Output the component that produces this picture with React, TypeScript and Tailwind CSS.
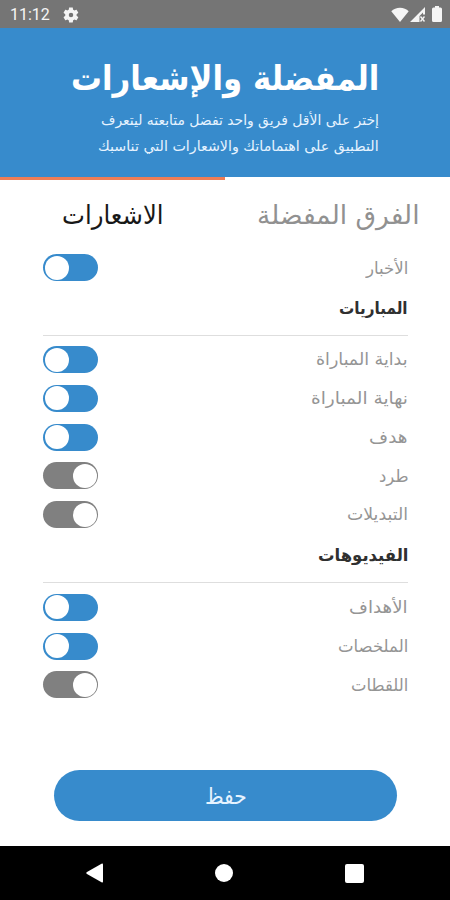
import { useLayoutEffect, useRef, useState } from "react";
import clsx from "clsx";

type FitTextProps = {
  text: string;
  width: number;
  className?: string;
};

// Stretches or squeezes a single line so that it fills the given width
function FitText({ text, width, className }: FitTextProps) {
  const ref = useRef<HTMLSpanElement>(null);
  const [scale, setScale] = useState(1);

  useLayoutEffect(() => {
    if (ref.current) setScale(width / ref.current.offsetWidth);
  }, [text, width]);

  return (
    <span className="flex justify-start" style={{ width }}>
      <span
        ref={ref}
        className={clsx("block shrink-0 origin-right whitespace-nowrap", className)}
        style={{ transform: `scaleX(${scale})` }}
      >
        {text}
      </span>
    </span>
  );
}

function Toggle({ on }: { on: boolean }) {
  return (
    <span
      dir="ltr"
      className={clsx(
        "mb-px flex h-[27px] w-[55px] items-center rounded-full px-[1.5px]",
        on ? "justify-start bg-[#378bcc]" : "justify-end bg-[#808080]"
      )}
    >
      <span className="size-6 rounded-full bg-white" />
    </span>
  );
}

type Item = { label: string; width: number; on: boolean };

function Row({ label, width, on }: Item) {
  return (
    <div className="flex h-[38.75px] items-center justify-between">
      <FitText text={label} width={width} className="text-[17px] text-[#959595]" />
      <Toggle on={on} />
    </div>
  );
}

function Heading({ text, width }: { text: string; width: number }) {
  return (
    <div className="flex h-12 items-start border-b border-[#dedede] pt-2">
      <FitText text={text} width={width} className="text-[17px] leading-6 font-bold text-[#303030]" />
    </div>
  );
}

const matches: Item[] = [
  { label: "بداية المباراة", width: 92, on: true },
  { label: "نهاية المباراة", width: 97, on: true },
  { label: "هدف", width: 39, on: true },
  { label: "طرد", width: 29, on: false },
  { label: "التبديلات", width: 61, on: false },
];

const videos: Item[] = [
  { label: "الأهداف", width: 59, on: true },
  { label: "الملخصات", width: 70, on: true },
  { label: "اللقطات", width: 57, on: false },
];

function StatusBar() {
  return (
    <div dir="ltr" className="flex h-7 items-center justify-between bg-[#757575] text-[#f5f5f5]">
      <div className="flex items-center pt-0.5 pl-2.5">
        <span className="w-[52px] font-[Roboto] text-[16px] leading-none">11:12</span>
        <svg className="size-[18px]" viewBox="0 0 24 24" fill="currentColor">
          <path d="M19.4 13c0-.3.1-.6.1-1s0-.7-.1-1l2.1-1.7c.2-.1.2-.4.1-.6l-2-3.5c-.1-.2-.4-.3-.6-.2l-2.5 1c-.5-.4-1.1-.7-1.7-1l-.4-2.6c0-.2-.2-.4-.5-.4h-4c-.2 0-.5.2-.5.4L9 5c-.6.3-1.2.6-1.7 1l-2.5-1c-.2-.1-.5 0-.6.2l-2 3.5c-.1.2-.1.5.1.6L4.400 11c0 .3-.1.7-.1 1s0 .7.1 1l-2.1 1.700c-.2.1-.2.4-.1.6l2 3.500c.1.2.4.3.6.2l2.500-1c.5.4 1.100.7 1.700 1l.4 2.600c0 .2.2.4.5.4h4c.2 0 .5-.2.5-.4l.4-2.600c.6-.3 1.200-.6 1.700-1l2.500 1c.2.1.5 0 .6-.2l2-3.500c.1-.2.1-.5-.1-.6zM12 15a3 3 0 1 1 0-6 3 3 0 0 1 0 6z" />
        </svg>
      </div>
      <div className="flex items-center pr-2">
        <svg className="h-[15px] w-[18px]" viewBox="0 0 18 15" fill="currentColor">
          <path d="M9 15 .3 4.2C2.500 2 5.500.7 9 .7s6.500 1.300 8.700 3.500z" />
        </svg>
        <svg className="ml-px h-[15px] w-[15px]" viewBox="0 0 15 15" fill="currentColor">
          <path d="M0 15 15 0v7.500h-2V5.500l-3.500 3.500V15z" />
          <path d="m10.500 9.500 4 5m0-5-4 5" stroke="currentColor" strokeWidth="1.4" />
        </svg>
        <svg className="ml-[7px] h-[16px] w-[10px]" viewBox="0 0 10 16" fill="currentColor">
          <path d="M3 0h4v1.500h1.500Q10 1.500 10 3v11.500q0 1.500-1.500 1.500h-7Q0 16 0 14.500V3q0-1.500 1.500-1.500H3z" />
        </svg>
      </div>
    </div>
  );
}

function NavBar() {
  return (
    <div dir="ltr" className="flex h-[54px] items-center justify-between bg-black pr-[86px] pl-[86px] text-white">
      <svg className="h-5 w-[17px]" viewBox="0 0 17 20" fill="currentColor">
        <path d="M15.5.8Q17 0 17 1.500v17q0 1.500-1.500.7L1 11Q-.5 10 1 9z" />
      </svg>
      <span className="size-[18px] rounded-full bg-white" />
      <span className="size-[19px] rounded-[2px] bg-white" />
    </div>
  );
}

export default function App() {
  return (
    <div
      dir="rtl"
      className="flex h-[900px] w-[450px] flex-col overflow-hidden bg-white font-['DejaVu_Sans',sans-serif]"
    >
      <StatusBar />

      <header className="flex h-[149px] flex-col bg-[#378bcc] pt-7 pr-[71px] text-white">
        <FitText text="المفضلة والإشعارات" width={308} className="text-[34px] leading-[44px] font-bold" />
        <div className="pt-[7px] text-[#e6f3ff]">
          <FitText text="إختر على الأقل فريق واحد تفضل متابعته ليتعرف" width={278} className="text-[14px] leading-[26px]" />
          <FitText text="التطبيق على اهتماماتك والاشعارات التي تناسبك" width={281} className="text-[14px] leading-[26px]" />
        </div>
      </header>
      <div className="flex h-[3px] justify-end">
        <div className="w-[225px] bg-[#ee7d55]" />
      </div>

      <div className="flex h-[69px] items-center justify-between pt-0.5 pr-[30px] pl-[62px]">
        <FitText text="الفرق المفضلة" width={163} className="text-[26px] text-[#919191]" />
        <FitText text="الاشعارات" width={102} className="text-[26px] text-[#181818]" />
      </div>

      <main className="flex-1 pr-[42px] pl-[43px]">
        <Row label="الأخبار" width={42} on />
        <Heading text="المباريات" width={69} />
        <div className="pt-[5px]">
          {matches.map((item) => (
            <Row key={item.label} {...item} />
          ))}
        </div>
        <Heading text="الفيديوهات" width={91} />
        <div className="pt-1.5">
          {videos.map((item) => (
            <Row key={item.label} {...item} />
          ))}
        </div>
      </main>

      <div className="flex h-[76px] items-start justify-center">
        <button className="flex h-[51px] w-[343px] items-center justify-center rounded-full bg-[#378bcc] pt-0.5 pl-0.5">
          <FitText text="حفظ" width={42} className="text-[23px] text-[#e6f3ff]" />
        </button>
      </div>
      <NavBar />
    </div>
  );
}
